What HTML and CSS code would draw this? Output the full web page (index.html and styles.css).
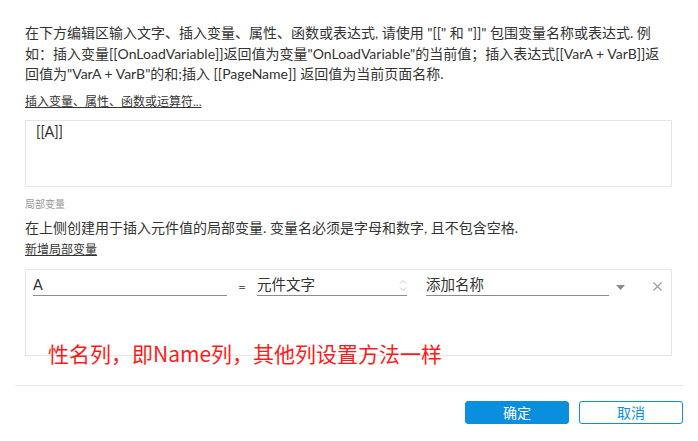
FILE: index.html
```html
<!DOCTYPE html>
<html lang="zh-CN">
<head>
<meta charset="utf-8">
<title>插入文本</title>
<link rel="stylesheet" href="styles.css">
</head>
<body>
<div class="dialog">
  <div class="content">
    <p class="intro">在下方编辑区输入文字、插入变量、属性、函数或表达式, 请使用 "[[" 和 "]]" 包围变量名称或表达式. 例<br>如：插入变量[[OnLoadVariable]]返回值为变量"OnLoadVariable"的当前值；插入表达式[[VarA + VarB]]返<br>回值为"VarA + VarB"的和;插入 [[PageName]] 返回值为当前页面名称.</p>
    <div class="link">插入变量、属性、函数或运算符...</div>
    <div class="editor">[[A]]</div>
    <div class="label">局部变量</div>
    <div class="desc">在上侧创建用于插入元件值的局部变量. 变量名必须是字母和数字, 且不包含空格.</div>
    <div class="link add">新增局部变量</div>
    <div class="vars">
      <div class="row">
        <div class="field name">A</div>
        <div class="eq">=</div>
        <div class="field type">元件文字
          <svg class="spin" width="8" height="13" viewBox="0 0 8 13"><path d="M1 4.5 L4 1.5 L7 4.5 M1 8.5 L4 11.5 L7 8.5" fill="none" stroke="#c8c8c8" stroke-width="1"/></svg>
        </div>
        <div class="field target">添加名称</div>
        <svg class="caret" width="9" height="5" viewBox="0 0 9 5"><path d="M0 0 H9 L4.5 5 Z" fill="#8a8a8a"/></svg>
        <svg class="close" width="9" height="9" viewBox="0 0 9 9"><path d="M0.5 0.5 L8.5 8.5 M8.5 0.5 L0.5 8.5" stroke="#9a9a9a" stroke-width="1.1"/></svg>
      </div>
    </div>
  </div>
  <div class="note">性名列，即Name列，其他列设置方法一样</div>
  <div class="footer">
    <button class="btn primary">确定</button>
    <button class="btn secondary">取消</button>
  </div>
</div>
</body>
</html>
```

FILE: styles.css
```css
html, body {
  margin: 0;
  padding: 0;
  background: #ffffff;
}
body {
  font-family: Lato, "Noto Sans CJK SC", sans-serif;
  color: #333333;
  width: 698px;
  height: 441px;
  overflow: hidden;
}
.dialog {
  position: relative;
  width: 698px;
  height: 441px;
}
.content {
  padding: 23px 26px 0 25px;
}
.intro {
  margin: 0;
  font-size: 14px;
  line-height: 20.5px;
  white-space: nowrap;
  color: #333;
}
.link {
  margin-top: 9px;
  font-size: 12px;
  line-height: 16px;
  text-decoration: underline;
  color: #333;
}
.editor {
  margin-top: 10px;
  border: 1px solid #e5e5e5;
  padding: 2px 10px 0;
  box-sizing: border-box;
  height: 67px;
  font-size: 14.5px;
  line-height: 18px;
}
.label {
  margin-top: 10px;
  font-size: 10px;
  line-height: 14px;
  color: #999;
}
.desc {
  margin-top: 7px;
  font-size: 14px;
  line-height: 20px;
}
.link.add {
  margin-top: 4px;
}
.vars {
  margin-top: 11px;
  height: 87px;
  box-sizing: border-box;
  border: 1px solid #e5e5e5;
  padding: 6px 0 0 7px;
}
.row {
  display: flex;
  align-items: center;
  height: 20px;
}
.field {
  position: relative;
  height: 20px;
  box-sizing: border-box;
  border-bottom: 1px solid #8c8c8c;
  font-size: 14.5px;
  line-height: 18px;
  color: #333;
}
.field.name {
  width: 194px;
}
.eq {
  width: 30px;
  text-align: center;
  font-size: 13px;
  line-height: 20px;
  padding-top: 2px;
  color: #555;
}
.field.type {
  width: 150px;
}
.spin {
  position: absolute;
  right: 0;
  top: 3px;
}
.field.target {
  width: 183px;
  margin-left: 19px;
}
.caret {
  margin-left: 7px;
  margin-top: 4px;
}
.close {
  margin-left: 28px;
  margin-top: 2px;
}
.note {
  position: absolute;
  left: 48px;
  top: 339px;
  font-family: "Noto Sans CJK SC", sans-serif;
  font-size: 21px;
  line-height: 28px;
  color: #ff1a1a;
  white-space: nowrap;
}
.footer {
  margin: 29px 15px 0;
  border-top: 1px solid #e6e6e6;
  padding-top: 15px;
  display: flex;
  justify-content: flex-end;
  gap: 10px;
}
.btn {
  width: 104px;
  height: 23px;
  border-radius: 3px;
  font-family: "Noto Sans CJK SC", sans-serif;
  font-size: 14px;
  line-height: 20px;
  padding: 0;
  box-sizing: border-box;
  cursor: pointer;
}
.btn.primary {
  background: #0a8fdf;
  border: 1px solid #0a8fdf;
  color: #ffffff;
}
.btn.secondary {
  background: #ffffff;
  border: 1px solid #0a8fdf;
  color: #0a8fdf;
}
```
